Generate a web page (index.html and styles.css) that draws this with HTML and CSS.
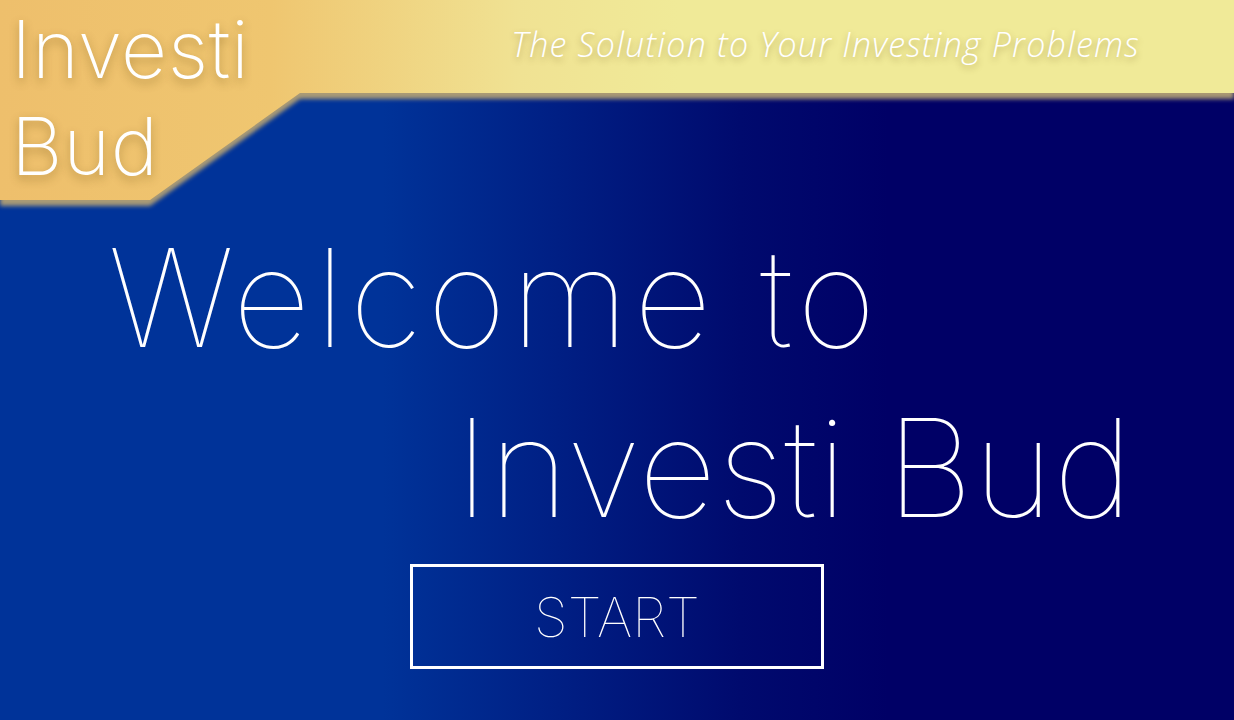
FILE: index.html
```html
<!DOCTYPE html>
<html lang="en">
<head>
<meta charset="utf-8">
<title>Investi Bud</title>
<link rel="stylesheet" href="styles.css">
</head>
<body>
<div class="page">
  <header class="banner">
    <div class="banner-bg"><div class="banner-shape"></div></div>
    <div class="banner-content">
      <div class="logo"><span>Investi</span><span>Bud</span></div>
      <div class="tagline">The Solution to Your Investing Problems</div>
    </div>
  </header>
  <main class="hero">
    <h1 class="title">
      <span class="line line-1">Welcome to</span>
      <span class="line line-2">Investi Bud</span>
    </h1>
    <div class="actions">
      <button class="start">START</button>
    </div>
  </main>
</div>
</body>
</html>
```

FILE: styles.css
```css
html, body {
  margin: 0;
  padding: 0;
}
body {
  width: 1234px;
  height: 720px;
  overflow: hidden;
  background: linear-gradient(90deg, #003399 0%, #003399 31%, #000a6e 60%, #000066 72%, #000066 100%);
  font-family: Inter, "Open Sans", sans-serif;
  color: #fff;
}
.page {
  display: flex;
  flex-direction: column;
  height: 720px;
}
.banner {
  display: grid;
  height: 200px;
}
.banner-bg,
.banner-content {
  grid-area: 1 / 1;
}
.banner-bg {
  filter: drop-shadow(0 6px 2px rgba(178, 160, 116, 0.95));
}
.banner-shape {
  height: 100%;
  background: linear-gradient(90deg, #eebf6c 0%, #efc670 22%, #f0e293 42%, #f0ea98 55%, #f0ea98 100%);
  clip-path: polygon(0 0, 100% 0, 100% 93px, 300px 93px, 150px 200px, 0 200px);
}
.banner-content {
  position: relative;
  z-index: 1;
  display: flex;
  justify-content: space-between;
  align-items: flex-start;
}
.logo {
  display: flex;
  flex-direction: column;
  gap: 5px;
  padding-top: 3px;
  padding-left: 11px;
  font-size: 80px;
  font-weight: 200;
  letter-spacing: 0.6px;
  line-height: 92px;
  text-shadow: 0 4px 10px rgba(110, 80, 20, 0.45);
}
.tagline {
  font-family: "Open Sans", sans-serif;
  font-style: italic;
  font-weight: 300;
  font-size: 34px;
  letter-spacing: 1.2px;
  line-height: 46px;
  padding-top: 21px;
  padding-right: 94px;
  text-shadow: 0 3px 6px rgba(120, 100, 40, 0.45);
}
.hero {
  display: flex;
  flex-direction: column;
  flex: 1;
}
.title {
  margin: 0;
  font-weight: 100;
  font-size: 136px;
  line-height: 170px;
  display: flex;
  flex-direction: column;
}
.line-1 {
  padding-left: 108px;
  margin-top: 13px;
  letter-spacing: 5px;
}
.line-2 {
  padding-left: 455px;
  letter-spacing: 0.5px;
}
.actions {
  padding-left: 410px;
  margin-top: 11px;
}
.start {
  width: 414px;
  height: 105px;
  background: transparent;
  border: 3px solid #fff;
  color: #fff;
  font-family: Inter, sans-serif;
  font-weight: 100;
  font-size: 55px;
  padding: 0;
}
```
